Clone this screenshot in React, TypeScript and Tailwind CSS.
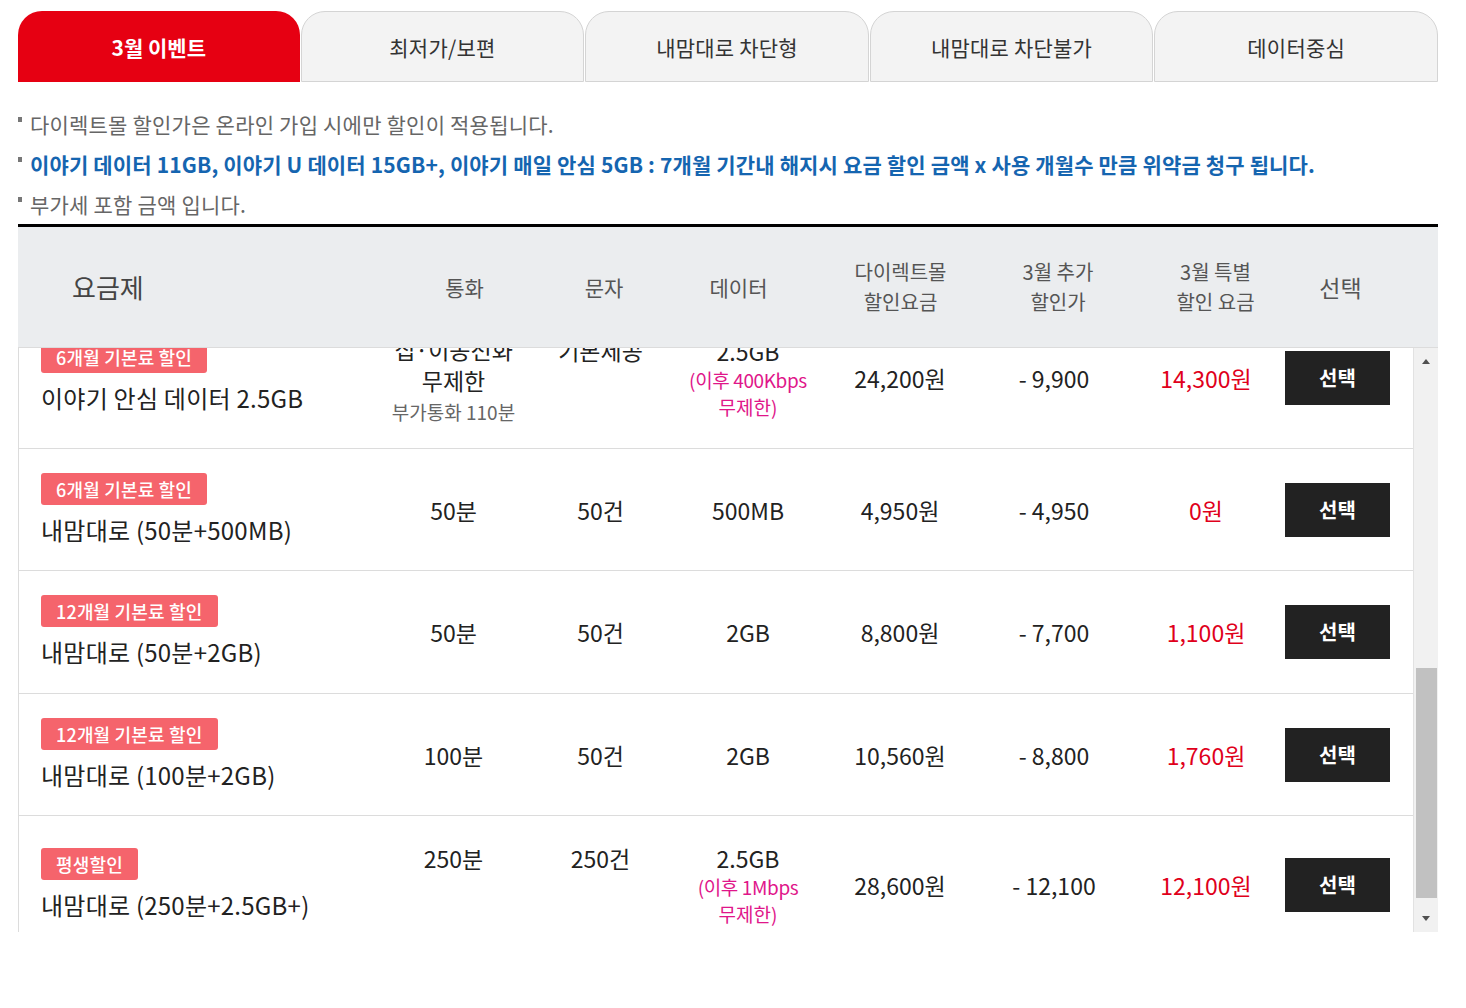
import React from "react";

type RowData = {
  badge: string;
  name: string;
  call: React.ReactNode;
  sms: React.ReactNode;
  data: React.ReactNode;
  direct: string;
  extra: string;
  special: string;
  h: string;
  first?: boolean;
};

const tabs = ["3월 이벤트", "최저가/보편", "내맘대로 차단형", "내맘대로 차단불가", "데이터중심"];

function DataCell({ main, sub1, sub2 }: { main: string; sub1: string; sub2: string }) {
  return (
    <div className="flex flex-col items-center">
      <div className="text-[23px] leading-[30px] text-[#222]">{main}</div>
      <div className="text-[19px] leading-[27px] text-[#e0168a] tracking-[-0.02em] whitespace-nowrap">{sub1}</div>
      <div className="text-[19px] leading-[27px] text-[#e0168a]">{sub2}</div>
    </div>
  );
}

const val = "text-[23px] leading-[30px] text-[#222]";

const rows: RowData[] = [
  {
    badge: "6개월 기본료 할인",
    name: "이야기 안심 데이터 2.5GB",
    call: (
      <div className="flex flex-col items-center mt-[6px]">
        <div className="text-[23px] leading-[31px] text-[#222]">집·이동전화</div>
        <div className="text-[23px] leading-[31px] text-[#222]">무제한</div>
        <div className="text-[19px] leading-[31px] text-[#666]">부가통화 110분</div>
      </div>
    ),
    sms: <div className={`${val} mb-[56px]`}>기본제공</div>,
    data: <DataCell main="2.5GB" sub1="(이후 400Kbps" sub2="무제한)" />,
    direct: "24,200원",
    extra: "- 9,900",
    special: "14,300원",
    h: "h-[142px]",
    first: true,
  },
  {
    badge: "6개월 기본료 할인",
    name: "내맘대로 (50분+500MB)",
    call: <div className={val}>50분</div>,
    sms: <div className={val}>50건</div>,
    data: <div className={val}>500MB</div>,
    direct: "4,950원",
    extra: "- 4,950",
    special: "0원",
    h: "h-[122px]",
  },
  {
    badge: "12개월 기본료 할인",
    name: "내맘대로 (50분+2GB)",
    call: <div className={val}>50분</div>,
    sms: <div className={val}>50건</div>,
    data: <div className={val}>2GB</div>,
    direct: "8,800원",
    extra: "- 7,700",
    special: "1,100원",
    h: "h-[123px]",
  },
  {
    badge: "12개월 기본료 할인",
    name: "내맘대로 (100분+2GB)",
    call: <div className={val}>100분</div>,
    sms: <div className={val}>50건</div>,
    data: <div className={val}>2GB</div>,
    direct: "10,560원",
    extra: "- 8,800",
    special: "1,760원",
    h: "h-[122px]",
  },
  {
    badge: "평생할인",
    name: "내맘대로 (250분+2.5GB+)",
    call: <div className={`${val} mb-[54px]`}>250분</div>,
    sms: <div className={`${val} mb-[54px]`}>250건</div>,
    data: <DataCell main="2.5GB" sub1="(이후 1Mbps" sub2="무제한)" />,
    direct: "28,600원",
    extra: "- 12,100",
    special: "12,100원",
    h: "h-[138px]",
  },
];

function Row({ r }: { r: RowData }) {
  return (
    <div
      className={`flex items-center border-b border-[#dcdcdc] ${r.h} ${r.first ? "mt-[-41px]" : ""}`}
    >
      <div className="w-[361px] shrink-0 pl-[22px] flex flex-col items-start">
        <div className="h-[32px] px-[15px] rounded-[3px] bg-[#f5646c] text-white text-[18px] font-medium leading-[32px] tracking-[0.01em]">
          {r.badge}
        </div>
        <div className="mt-[8px] text-[24px] leading-[34px] text-[#222] tracking-[0.01em] whitespace-nowrap">
          {r.name}
        </div>
      </div>
      <div className="w-[147px] shrink-0 flex justify-center">{r.call}</div>
      <div className="w-[147px] shrink-0 flex justify-center">{r.sms}</div>
      <div className="w-[148px] shrink-0 flex justify-center">{r.data}</div>
      <div className="w-[156px] shrink-0 text-center text-[23px] leading-[30px] text-[#222]">{r.direct}</div>
      <div className="w-[152px] shrink-0 text-center text-[23px] leading-[30px] text-[#222]">{r.extra}</div>
      <div className="w-[152px] shrink-0 text-center text-[23px] leading-[30px] text-[#e0001b]">{r.special}</div>
      <div className="flex-1 pl-[3px]">
        <button className="w-[105px] h-[54px] bg-[#222] text-white text-[20px] font-bold">선택</button>
      </div>
    </div>
  );
}

export default function App() {
  return (
    <div className="bg-white min-h-[1008px] w-[1466px] font-['Noto_Sans_CJK_KR','Noto_Sans',sans-serif]">
      <div className="ml-[18px] w-[1420px] pt-[11px]">
        {/* Tabs */}
        <div className="flex h-[71px]">
          {tabs.map((t, i) =>
            i === 0 ? (
              <div
                key={t}
                className="flex-1 flex items-center justify-center pt-[3px] rounded-t-[24px] bg-[#e60012] text-white text-[21px] font-bold"
              >
                {t}
              </div>
            ) : (
              <div
                key={t}
                className="flex-1 flex items-center justify-center pt-[3px] rounded-t-[24px] bg-[#f3f3f3] border border-[#d4d4d4] text-[#333] text-[21px] tracking-[0.01em] ml-[1px]"
              >
                {t}
              </div>
            )
          )}
        </div>

        {/* Notes */}
        <div className="mt-[22px] text-[21px] leading-[40px]">
          <div className="flex items-center text-[#666] tracking-[0.01em]">
            <span className="w-[4px] h-[5px] bg-[#777] mr-[8px] mb-[10px]" />
            다이렉트몰 할인가은 온라인 가입 시에만 할인이 적용됩니다.
          </div>
          <div className="flex items-center text-[#1565b0] font-bold whitespace-nowrap tracking-[0.15px]">
            <span className="w-[4px] h-[5px] bg-[#777] mr-[8px] mb-[10px]" />
            이야기 데이터 11GB, 이야기 U 데이터 15GB+, 이야기 매일 안심 5GB : 7개월 기간내 해지시 요금 할인 금액 x 사용 개월수 만큼 위약금 청구 됩니다.
          </div>
          <div className="flex items-center text-[#666] tracking-[0.01em]">
            <span className="w-[4px] h-[5px] bg-[#777] mr-[8px] mb-[10px]" />
            부가세 포함 금액 입니다.
          </div>
        </div>

        {/* Header */}
        <div className="flex items-center h-[124px] border-t-[3px] border-black bg-[#ebedef] border-b border-b-[#dcdcdc] text-[#555] text-[20px] leading-[30px]">
          <div className="w-[376px] shrink-0 pl-[54px] text-[26px] text-[#444]">요금제</div>
          <div className="w-[141px] shrink-0 text-center text-[21px]">통화</div>
          <div className="w-[138px] shrink-0 text-center text-[21px]">문자</div>
          <div className="w-[131px] shrink-0 text-center text-[21px]">데이터</div>
          <div className="w-[193px] shrink-0 text-center">
            다이렉트몰
            <br />
            할인요금
          </div>
          <div className="w-[122px] shrink-0 text-center">
            3월 추가
            <br />
            할인가
          </div>
          <div className="w-[193px] shrink-0 text-center">
            3월 특별
            <br />
            할인 요금
          </div>
          <div className="w-[57px] shrink-0 text-center text-[23px]">선택</div>
          <div className="flex-1" />
        </div>

        {/* Body */}
        <div className="flex h-[584px]">
          <div className="flex-1 overflow-hidden border-l border-[#dcdcdc]">
            {rows.map((r, i) => (
              <Row key={i} r={r} />
            ))}
          </div>
          <div className="w-[25px] shrink-0 bg-[#f1f1f1] border-l border-[#e2e2e2] flex flex-col items-center">
            <div className="mt-[11px] w-0 h-0 border-l-[4px] border-r-[4px] border-b-[5px] border-l-transparent border-r-transparent border-b-[#505050]" />
            <div className="mt-[304px] w-[21px] h-[230px] bg-[#c1c1c1]" />
            <div className="mt-[18px] w-0 h-0 border-l-[4px] border-r-[4px] border-t-[5px] border-l-transparent border-r-transparent border-t-[#505050]" />
          </div>
        </div>
      </div>
    </div>
  );
}
